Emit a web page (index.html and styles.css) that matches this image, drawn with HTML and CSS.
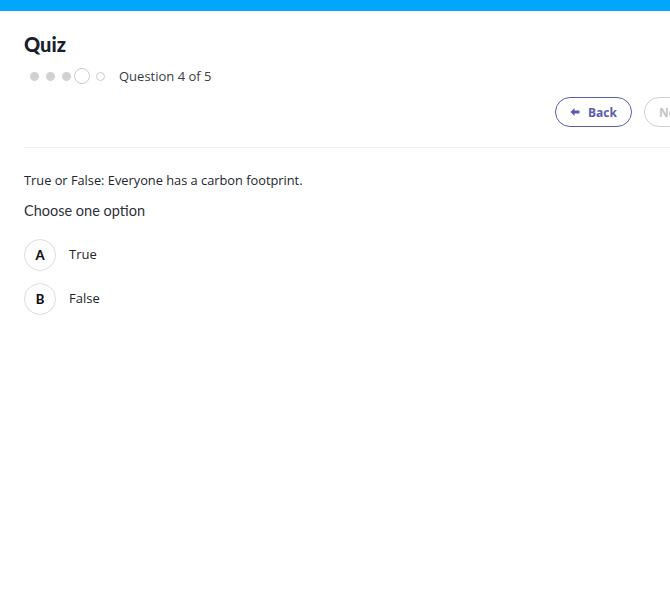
FILE: index.html
```html
<!DOCTYPE html>
<html lang="en">
<head>
    <meta charset="UTF-8">
    <meta name="viewport" content="width=device-width, initial-scale=1.0">
    <title>Quiz</title>
    <link rel="stylesheet" href="styles.css">
</head>
<body>
    <div class="topbar"></div>
    <div class="quiz">
        <div class="quiz-header">
            <h1>Quiz</h1>
            <div class="progress">
                <div class="steps">
                    <span class="step done"></span>
                    <span class="step done"></span>
                    <span class="step done"></span>
                    <span class="step current"></span>
                    <span class="step"></span>
                </div>
                <span class="progress-label">Question 4 of 5</span>
            </div>
            <div class="actions">
                <button type="button" class="btn btn-back">
                    <svg width="10" height="10" viewBox="0 0 10 10"><path d="M0.5 5 L4.5 1 L4.5 3.6 L9.5 3.6 L9.5 6.4 L4.5 6.4 L4.5 9 Z" fill="currentColor"/></svg>
                    Back
                </button>
                <button type="button" class="btn btn-next" disabled>
                    Next
                    <svg width="10" height="10" viewBox="0 0 10 10"><path d="M9.5 5 L5.5 1 L5.5 3.6 L0.5 3.6 L0.5 6.4 L5.5 6.4 L5.5 9 Z" fill="currentColor"/></svg>
                </button>
            </div>
        </div>

        <!-- Question -->
        <p class="question">True or False: Everyone has a carbon footprint.</p>
        <p class="hint">Choose one option</p>
        <ul class="options">
            <li class="option"><span class="option-key">A</span><span class="option-text">True</span></li>
            <li class="option"><span class="option-key">B</span><span class="option-text">False</span></li>
        </ul>
    </div>
</body>
</html>
```

FILE: styles.css
```css
html, body {
    overflow: hidden;
}
body {
    margin: 0;
    font-family: "Open Sans", "Noto Sans", sans-serif;
    color: #22262e;
    background-color: #fff;
}
.topbar {
    height: 11px;
    background-color: #00a6fb;
}
.quiz {
    width: 697px;
    padding: 0 24px;
}
.quiz-header {
    padding-top: 21px;
    padding-bottom: 20px;
    border-bottom: 1px solid #f0f0f0;
}
h1 {
    margin: 0;
    font-family: Lato, sans-serif;
    font-weight: 900;
    font-size: 20px;
    line-height: 24px;
    color: #18202e;
}
.progress {
    display: flex;
    align-items: center;
    height: 20px;
    margin-top: 10px;
}
.steps {
    display: flex;
    align-items: center;
    gap: 7px;
    padding-left: 6px;
}
.step {
    width: 7px;
    height: 7px;
    border: 1px solid #ccc;
    border-radius: 50%;
    margin-left: -1px;
}
.step.done {
    width: 9px;
    height: 9px;
    border: none;
    margin-left: 0;
    background-color: #d2d2d6;
}
.step.current {
    width: 14px;
    height: 14px;
    border: 1.5px solid #ccc;
    margin-left: -4px;
}
.progress-label {
    margin-left: 14px;
    font-size: 13px;
    color: #3a3d45;
}
.actions {
    display: flex;
    justify-content: flex-end;
    gap: 12px;
    margin-top: 11px;
}
.btn {
    display: flex;
    align-items: center;
    justify-content: center;
    gap: 8px;
    width: 77px;
    height: 30px;
    padding: 0;
    font-family: "Open Sans", sans-serif;
    font-size: 12px;
    font-weight: 700;
    background-color: #fff;
    border-radius: 15px;
    cursor: pointer;
}
.btn-back {
    color: #5a5cb0;
    border: 1px solid #5a5cb0;
}
.btn-next {
    color: #c4c4c4;
    border: 1px solid #d0d0d0;
}
.question {
    margin: 23px 0 0;
    font-size: 12.8px;
    line-height: 18px;
    color: #22262e;
}
.hint {
    margin: 12px 0 0;
    font-family: Lato, sans-serif;
    font-size: 14.5px;
    line-height: 20px;
    color: #2e323a;
}
.options {
    list-style: none;
    margin: 18px 0 0;
    padding: 0;
}
.option {
    display: flex;
    align-items: center;
    gap: 13px;
    margin-bottom: 12px;
}
.option-key {
    display: flex;
    align-items: center;
    justify-content: center;
    width: 30px;
    height: 30px;
    border: 1px solid #ddd;
    border-radius: 50%;
    font-family: Lato, sans-serif;
    font-weight: 900;
    font-size: 13px;
    color: #111;
}
.option-text {
    font-size: 13px;
    margin-top: -2px;
}
```
